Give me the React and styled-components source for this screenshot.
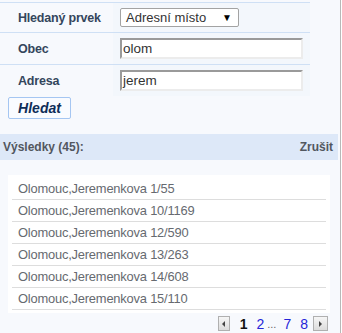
import React from "react";
import styled, { createGlobalStyle } from "styled-components";

const GlobalStyle = createGlobalStyle`
  body {
    margin: 0;
    background: #ffffff;
    font-family: "Liberation Sans", Arial, sans-serif;
  }
`;

const Panel = styled.div`
  width: 341px;
  height: 333px;
  box-sizing: border-box;
  background: #f7f9fd;
  border-right: 1px solid #b8b8b8;
  padding-top: 2px;
`;

const FormTable = styled.div`
  width: 310px;
  border-top: 1px solid #cfe0f5;
`;

const Row = styled.div`
  display: grid;
  grid-template-columns: 113px 197px;
  height: ${(p) => p.h}px;
  border-bottom: ${(p) => (p.last ? "none" : "1px solid #cfe0f5")};
`;

const Label = styled.div`
  display: flex;
  align-items: center;
  padding-left: 18px;
  font-size: 12.5px;
  font-weight: bold;
  color: #34465c;
  letter-spacing: -0.2px;
`;

const Cell = styled.div`
  display: flex;
  align-items: center;
  padding-left: 7px;
  background: #f3f7fc;
`;

const Select = styled.div`
  width: 119px;
  height: 19px;
  box-sizing: border-box;
  border: 1px solid #a3a3a3;
  border-radius: 2px;
  background: #ffffff;
  display: flex;
  align-items: center;
  justify-content: space-between;
  padding: 0 6px 0 5px;
  font-size: 13px;
  color: #333;
`;

const Arrow = styled.span`
  font-size: 10px;
  color: #000;
`;

const Input = styled.div`
  width: 183px;
  height: 21px;
  box-sizing: border-box;
  border-style: solid;
  border-width: 2px;
  border-color: #9a9a9a #ececec #ececec #9a9a9a;
  background: #ffffff;
  font-size: 13.5px;
  color: #333;
  line-height: 17px;
  padding-left: 1px;
`;

const Button = styled.div`
  margin: 1px 0 0 8px;
  width: 63px;
  height: 22px;
  box-sizing: border-box;
  border: 1px solid #a5c6f2;
  border-radius: 2px;
  background: #f9fbff;
  display: flex;
  align-items: center;
  justify-content: center;
  font-size: 14px;
  font-weight: bold;
  font-style: italic;
  color: #0e2d58;
`;

const ResultsBar = styled.div`
  margin-top: 15px;
  width: 338px;
  height: 26px;
  box-sizing: border-box;
  background: #dde8f8;
  display: flex;
  align-items: center;
  justify-content: space-between;
  padding: 0 5px 0 3px;
  font-size: 12px;
  font-weight: bold;
  color: #52575f;
`;

const List = styled.div`
  margin: 15px 0 0 8px;
  width: 322px;
  box-sizing: border-box;
  background: #ffffff;
  padding: 3px 4px;
`;

const Item = styled.div`
  height: 21px;
  border-bottom: 1px solid #dddddd;
  display: flex;
  align-items: center;
  padding-left: 6px;
  font-size: 12.9px;
  letter-spacing: -0.2px;
  color: #666a70;
`;

const Pager = styled.div`
  display: flex;
  justify-content: flex-end;
  align-items: center;
  margin-top: 3px;
  padding-right: 12px;
  height: 15px;
  font-size: 14px;
`;

const PageBtn = styled.div`
  width: ${(p) => p.w}px;
  height: 15px;
  margin-left: ${(p) => p.ml || 0}px;
  box-sizing: border-box;
  border: 1px solid #b0b0b0;
  background: linear-gradient(#f6f6f6, #dcdcdc);
  display: flex;
  align-items: center;
  justify-content: center;
`;

const Tri = styled.span`
  width: 0;
  height: 0;
  border-top: 3px solid transparent;
  border-bottom: 3px solid transparent;
  border-${(p) => (p.dir === "left" ? "right" : "left")}: 3px solid #444;
`;

const PageNum = styled.span`
  margin-left: ${(p) => p.ml}px;
  color: ${(p) => (p.current ? "#111" : "#2525d8")};
  font-weight: ${(p) => (p.current ? "bold" : "normal")};
`;

const Dots = styled.span`
  margin: 0 3px;
  color: #666;
  font-size: 11px;
`;

const results = [
  "Olomouc,Jeremenkova 1/55",
  "Olomouc,Jeremenkova 10/1169",
  "Olomouc,Jeremenkova 12/590",
  "Olomouc,Jeremenkova 13/263",
  "Olomouc,Jeremenkova 14/608",
  "Olomouc,Jeremenkova 15/110",
];

export default function App() {
  return (
    <Panel>
      <GlobalStyle />
      <FormTable>
        <Row h={29}>
          <Label>Hledaný prvek</Label>
          <Cell>
            <Select>
              Adresní místo
              <Arrow>▼</Arrow>
            </Select>
          </Cell>
        </Row>
        <Row h={31}>
          <Label>Obec</Label>
          <Cell>
            <Input>olom</Input>
          </Cell>
        </Row>
        <Row h={31} last>
          <Label>Adresa</Label>
          <Cell>
            <Input>jerem</Input>
          </Cell>
        </Row>
      </FormTable>
      <Button>Hledat</Button>
      <ResultsBar>
        <span>Výsledky (45):</span>
        <span>Zrušit</span>
      </ResultsBar>
      <List>
        {results.map((r) => (
          <Item key={r}>{r}</Item>
        ))}
      </List>
      <Pager>
        <PageBtn w={12}>
          <Tri dir="left" />
        </PageBtn>
        <PageNum current ml={10}>1</PageNum>
        <PageNum ml={9}>2</PageNum>
        <Dots>...</Dots>
        <PageNum ml={4}>7</PageNum>
        <PageNum ml={9}>8</PageNum>
        <PageBtn w={15} ml={5}>
          <Tri dir="right" />
        </PageBtn>
      </Pager>
    </Panel>
  );
}
